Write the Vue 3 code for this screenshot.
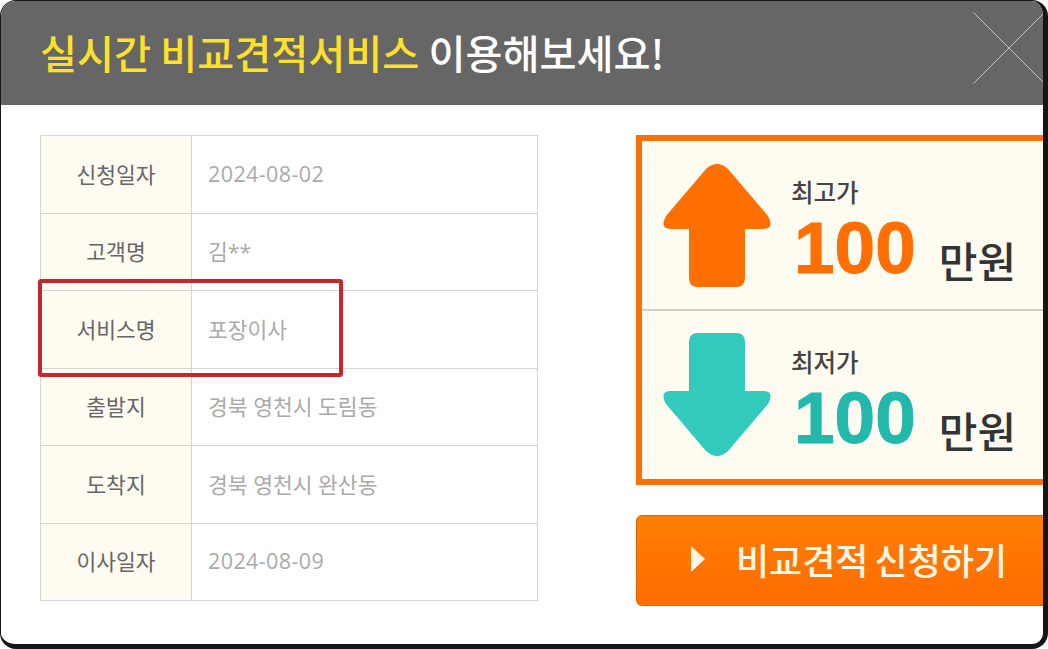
<template>
  <div class="popup">
    <header class="popup-head">
      <h1 class="popup-title"><em>실시간 비교견적서비스</em> 이용해보세요!</h1>
      <button class="close-btn" aria-label="닫기">
        <svg width="72" height="72" viewBox="0 0 72 72">
          <path d="M0.5 0.5L71.5 71.5M71.5 0.5L0.5 71.5" stroke="#c4c4c4" stroke-width="1" fill="none" />
        </svg>
      </button>
    </header>

    <div class="popup-body">
      <table class="info-table">
        <tbody>
          <tr v-for="row in rows" :key="row.label">
            <th>{{ row.label }}</th>
            <td :class="{ 'is-date': row.date }">{{ row.value }}</td>
          </tr>
        </tbody>
      </table>

      <div class="side">
        <div class="price-box">
          <div v-for="p in prices" :key="p.label" class="price-row" :class="p.cls">
            <svg class="arrow" width="108" height="123" viewBox="0 0 108 123">
              <path :transform="p.flip ? 'matrix(1 0 0 -1 0 123)' : ''" :d="arrowPath" />
            </svg>
            <div class="price-text">
              <div class="price-label">{{ p.label }}</div>
              <div class="price-line"><b>{{ p.amount }}</b><span>만원</span></div>
            </div>
          </div>
        </div>
        <button class="apply-btn"><i class="tri"></i>비교견적 신청하기</button>
      </div>
    </div>

    <div class="highlight"></div>
  </div>
</template>

<script setup>
const arrowPath = 'M43 5Q54 -5 65 5L105 52Q112 65 100 65L82 65L82 114Q82 123 73 123L35 123Q26 123 26 114L26 65L8 65Q-4 65 3 52Z'

const rows = [
  { label: '신청일자', value: '2024-08-02', date: true },
  { label: '고객명', value: '김**' },
  { label: '서비스명', value: '포장이사' },
  { label: '출발지', value: '경북 영천시 도림동' },
  { label: '도착지', value: '경북 영천시 완산동' },
  { label: '이사일자', value: '2024-08-09', date: true }
]

const prices = [
  { label: '최고가', amount: '100', cls: 'high', flip: false },
  { label: '최저가', amount: '100', cls: 'low', flip: true }
]
</script>

<style>
html, body {
  margin: 0;
  background: #fff;
  overflow: hidden;
}
</style>

<style scoped>
.popup {
  position: relative;
  box-sizing: border-box;
  width: 1048px;
  height: 649px;
  border-style: solid;
  border-color: #161616;
  border-width: 1px 5px 5px 1px;
  border-radius: 16px;
  overflow: hidden;
  background: #fff;
  font-family: "Noto Sans CJK KR", "Noto Sans", sans-serif;
}

.popup-head {
  position: relative;
  box-sizing: border-box;
  height: 104px;
  padding: 0 0 2px 39px;
  display: flex;
  align-items: center;
  background: #666;
}

.popup-title {
  margin: 0;
  font-size: 40.25px;
  font-weight: 500;
  color: #fff;
  line-height: 1;
}

.popup-title em {
  font-style: normal;
  color: #fde02a;
}

.close-btn {
  position: absolute;
  left: 972px;
  top: 11px;
  padding: 0;
  border: 0;
  background: none;
  line-height: 0;
}

.popup-body {
  display: flex;
  padding: 30px 0 0 39px;
}

.info-table {
  width: 498px;
  height: 466px;
  flex: none;
  border-collapse: collapse;
  font-family: "Open Sans", "Noto Sans CJK KR", sans-serif;
  font-size: 21.5px;
}

.info-table th,
.info-table td {
  border: 1px solid #d4d4d0;
  font-weight: 400;
  padding: 0 0 2px;
}

.info-table th {
  width: 150px;
  background: #fefcf1;
  color: #666;
  text-align: center;
}

.info-table td {
  padding-left: 16px;
  color: #aaa;
}

.info-table td.is-date {
  letter-spacing: 0.4px;
}

.side {
  flex: none;
  width: 440px;
  margin-left: 98px;
}

.price-box {
  box-sizing: border-box;
  height: 350px;
  border: 6px solid #f97008;
  background: #fefcf1;
}

.price-row {
  box-sizing: border-box;
  height: 169px;
  display: flex;
  padding: 22px 0 0 21px;
}

.price-row.high {
  border-bottom: 2px solid #cfcfca;
  height: 170px;
}

.arrow {
  flex: none;
}

.high .arrow {
  margin-top: 1px;
}

.high .arrow path {
  fill: #ff6e00;
}

.low .arrow path {
  fill: #31cabd;
}

.price-text {
  margin-left: 20px;
}

.price-label {
  margin-top: 16px;
  font-size: 24.5px;
  line-height: 26px;
  font-weight: 500;
  color: #444;
}

.price-line {
  display: flex;
  align-items: flex-start;
  margin-top: 11px;
  height: 64px;
}

.price-line b {
  margin-left: 3px;
  font-family: "Liberation Sans", Arial, sans-serif;
  font-size: 73px;
  font-weight: 700;
  line-height: 64px;
  -webkit-text-stroke: 1px currentColor;
}

.high .price-line b {
  color: #ff6e00;
}

.low .price-line b {
  color: #22b8ac;
}

.price-line span {
  margin: 12px 0 0 23px;
  font-size: 42px;
  font-weight: 500;
  line-height: 64px;
  color: #333;
}

.apply-btn {
  display: flex;
  align-items: center;
  box-sizing: border-box;
  width: 440px;
  height: 91px;
  margin-top: 30px;
  padding: 0 0 3px 54px;
  border: 1px solid #d96400;
  border-radius: 6px;
  background: linear-gradient(#ff7f06, #ff6c00);
  color: #fff6e6;
  font-family: inherit;
  font-size: 36px;
  font-weight: 500;
  word-spacing: -2px;
}

.tri {
  width: 0;
  height: 0;
  margin-right: 31px;
  border-left: 14px solid #fff6e6;
  border-top: 13px solid transparent;
  border-bottom: 13px solid transparent;
}

.highlight {
  position: absolute;
  left: 37px;
  top: 278px;
  width: 305px;
  height: 98px;
  box-sizing: border-box;
  border: 4px solid #c9252f;
  border-radius: 3px;
}
</style>
